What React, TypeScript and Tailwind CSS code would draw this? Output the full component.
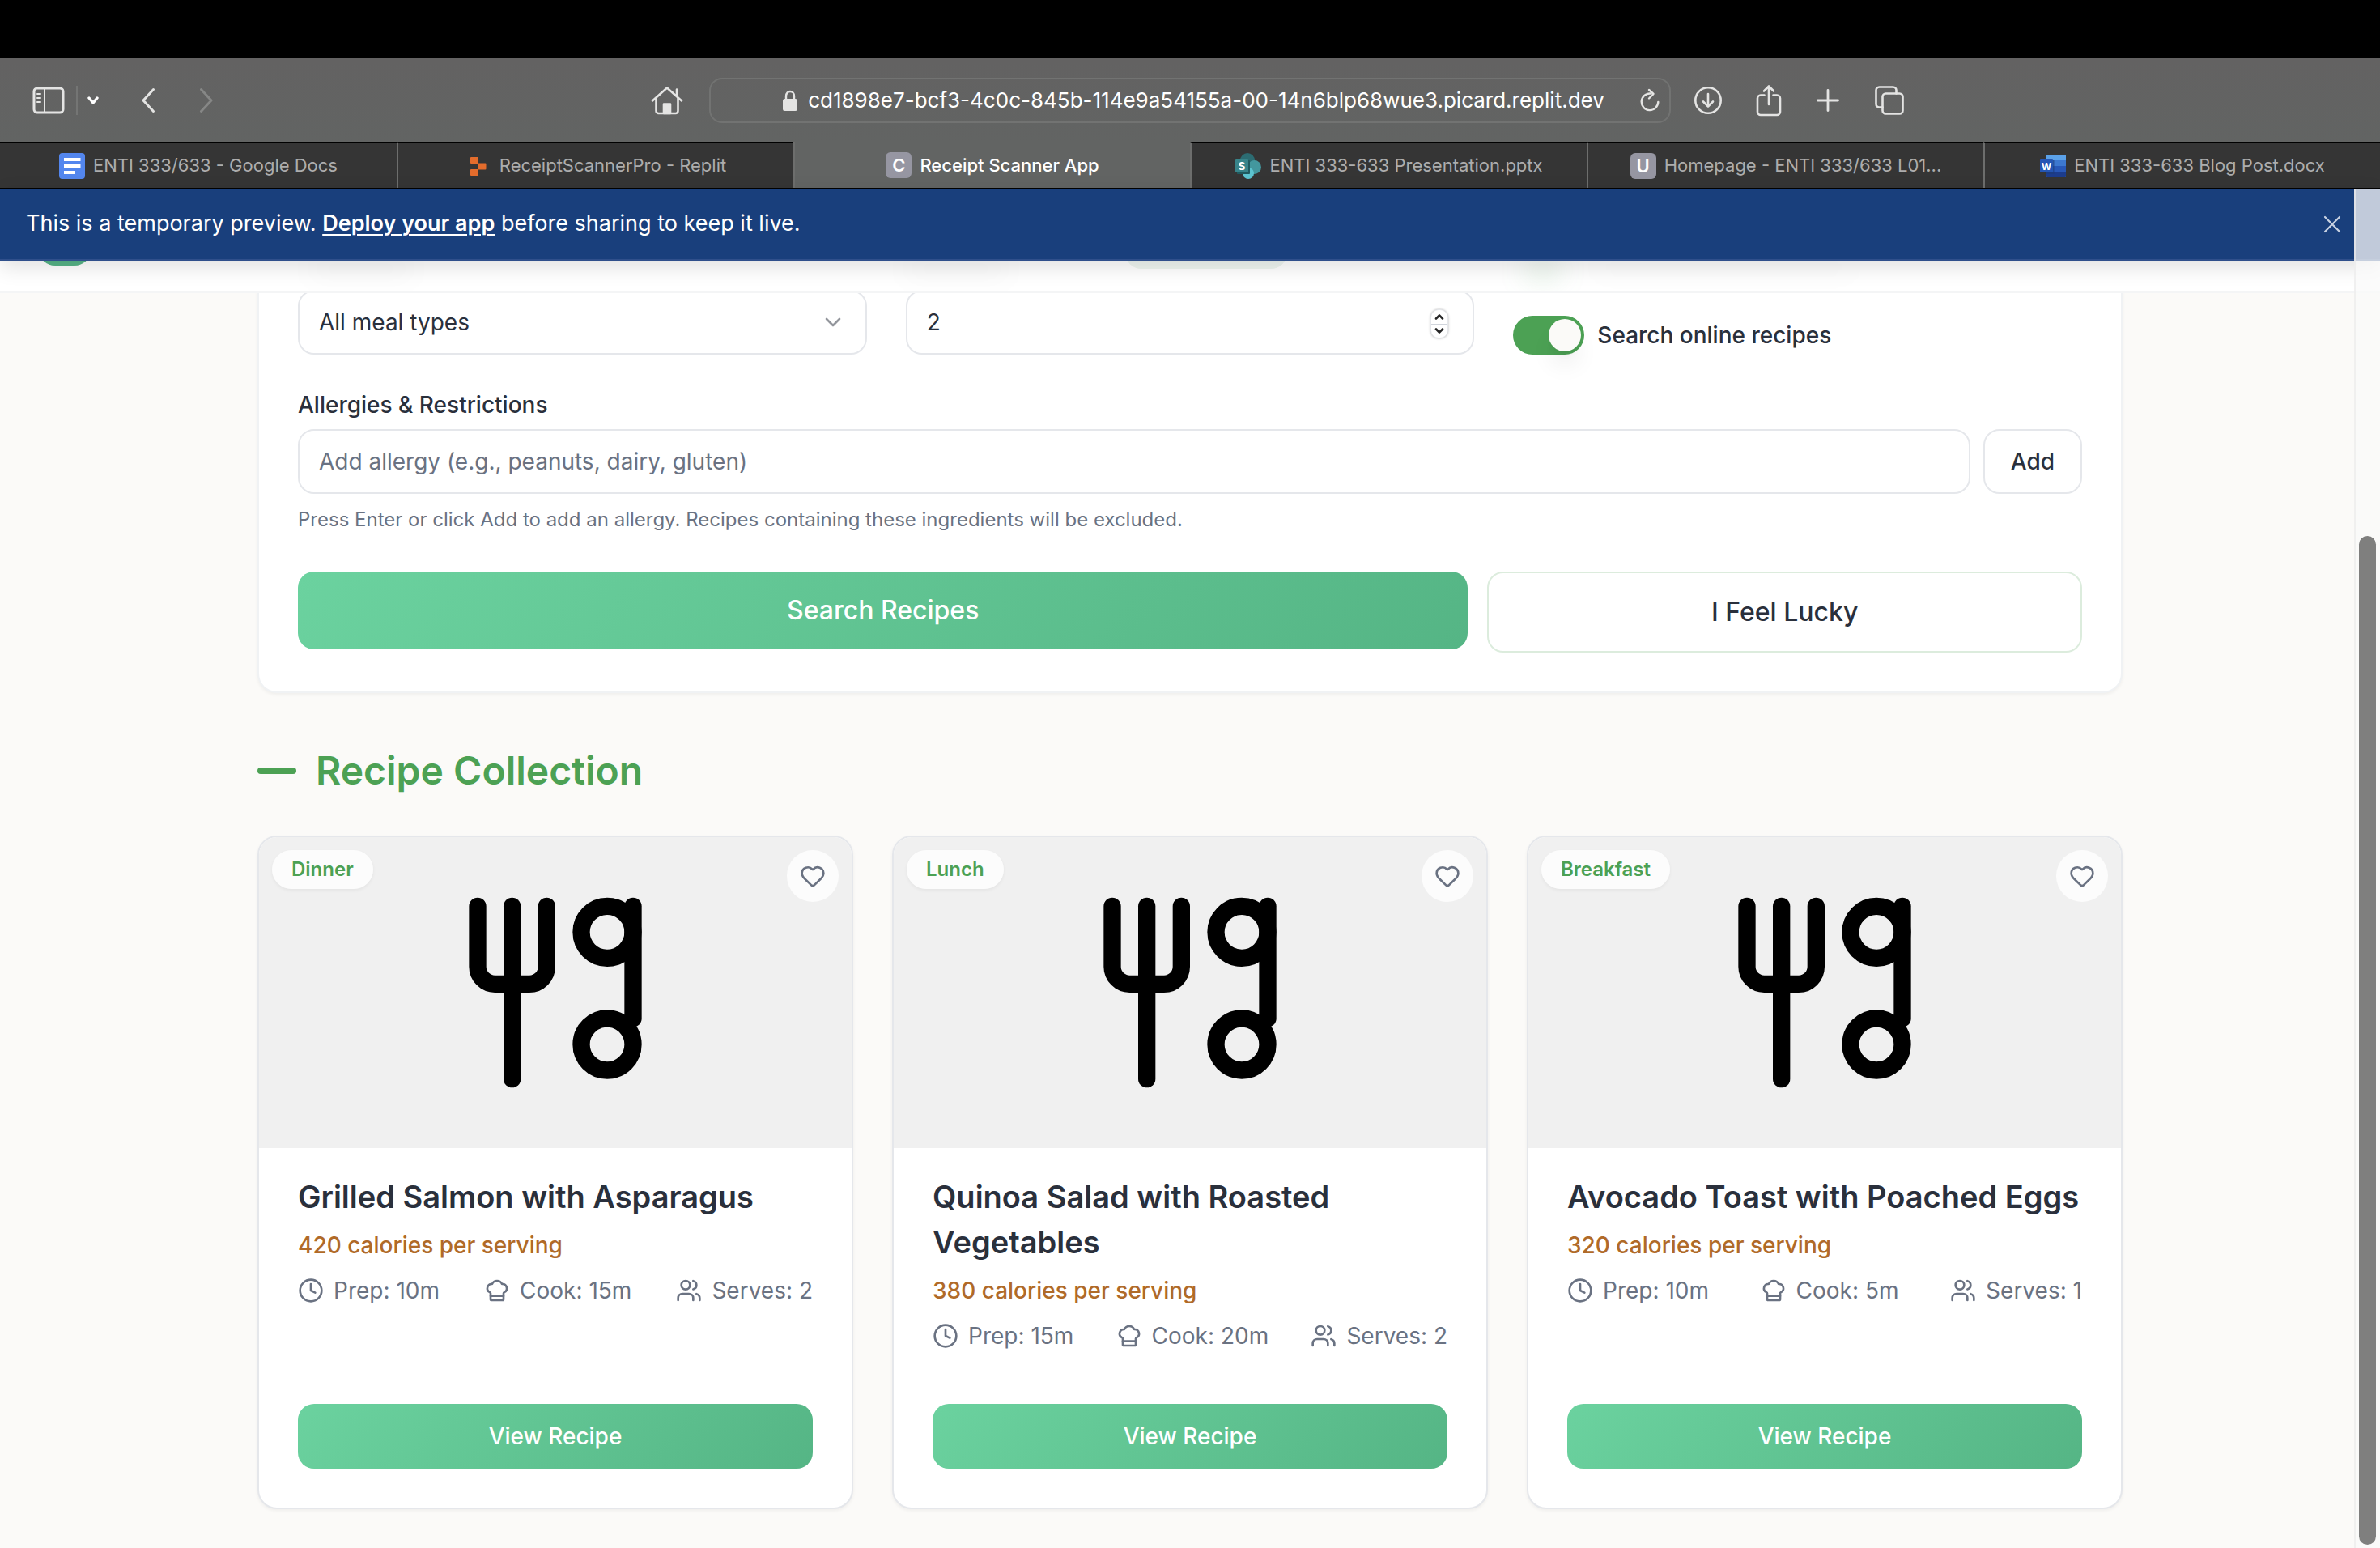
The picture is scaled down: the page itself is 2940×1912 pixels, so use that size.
import React from "react";
import { ChefHat, ChevronDown, Clock, Heart, Users } from "lucide-react";

/* ---------- Browser chrome ---------- */

function Stroke({ w, h, sw = 2.5, className = "", children }: { w: number; h: number; sw?: number; className?: string; children: React.ReactNode }) {
  return (
    <svg width={w} height={h} viewBox={`0 0 ${w} ${h}`} fill="none" stroke="currentColor" strokeWidth={sw} strokeLinecap="round" strokeLinejoin="round" className={className} aria-hidden="true">
      {children}
    </svg>
  );
}

function Toolbar() {
  return (
    <div className="grid h-[104px] grid-cols-[minmax(0,1fr)_minmax(0,1188px)_minmax(0,1fr)] items-center bg-linear-to-b from-[#636262] to-[#626463] text-[#e4e4e3]">
      <div className="flex items-center pr-8 pl-10">
        <button aria-label="Sidebar">
          <Stroke w={40} h={34} sw={3}>
            <rect x="2" y="2" width="36" height="30" rx="4" />
            <path d="M15 2v30" strokeWidth="2" />
            <path d="M6 9h4M6 14h4M6 19h4" strokeWidth="2" />
          </Stroke>
        </button>
        <span className="ml-3.5 h-9 w-0.5 bg-[#747574]" />
        <button aria-label="Tab groups" className="ml-3 text-white">
          <Stroke w={14} h={10} sw={3.4}>
            <path d="M2 2l5 6 5-6" />
          </Stroke>
        </button>
        <button aria-label="Back" className="ml-[52px]">
          <Stroke w={18} h={32} sw={3}>
            <path d="M15.500 2.500L3 16l12.500 13.500" />
          </Stroke>
        </button>
        <button aria-label="Forward" className="ml-[54px] text-[#868786]">
          <Stroke w={18} h={32} sw={3}>
            <path d="M2.500 2.500L15 16 2.500 29.500" />
          </Stroke>
        </button>
        <button aria-label="Home" className="ml-auto">
          <Stroke w={40} h={36} sw={2.6}>
            <path d="M2 18.500L20 2.500l18 16M32 12.500V4.500" />
            <path d="M6.500 15.500V31a3 3 0 0 0 3 3h21a3 3 0 0 0 3-3V15.500" />
            <path d="M16 34V22.500h8V34z" fill="currentColor" />
          </Stroke>
        </button>
      </div>
      <div className="flex h-14 items-center justify-center rounded-2xl border-2 border-[#727372] px-3">
        <div className="ml-8 flex min-w-0 flex-1 items-center justify-center gap-3">
          <svg width="20" height="26" viewBox="0 0 20 26" aria-hidden="true" className="shrink-0">
            <path d="M5 12V7.500a5 5.500 0 0 1 10 0V12" fill="none" stroke="currentColor" strokeWidth="2.400" />
            <rect x="1" y="11" width="18" height="15" rx="2.500" fill="currentColor" />
          </svg>
          <span className="truncate text-[26px] leading-8 text-white">cd1898e7-bcf3-4c0c-845b-114e9a54155a-00-14n6blp68wue3.picard.replit.dev</span>
        </div>
        <button aria-label="Reload">
          <Stroke w={24} h={30} sw={2.4}>
            <path d="M12.500 6.500A10.300 10.300 0 1 0 22.300 17" />
            <path d="M11 2l5.500 5L11 12.500" />
          </Stroke>
        </button>
      </div>
      <div className="flex items-center pl-7">
        <button aria-label="Downloads">
          <Stroke w={36} h={36} sw={2.6}>
            <circle cx="18" cy="18" r="15.700" />
            <path d="M18 10v15.500M12 19.500l6 6 6-6" />
          </Stroke>
        </button>
        <button aria-label="Share" className="ml-10">
          <Stroke w={34} h={40} sw={2.6}>
            <path d="M11.500 13.500H7a4 4 0 0 0-4 4V34a4 4 0 0 0 4 4h20a4 4 0 0 0 4-4V17.500a4 4 0 0 0-4-4h-4.500" />
            <path d="M17 25V3M11 8.500L17 2.500l6 6" />
          </Stroke>
        </button>
        <button aria-label="New tab" className="ml-[42px]">
          <Stroke w={28} h={28} sw={2.8}>
            <path d="M14 1.500v25M1.500 14h25" />
          </Stroke>
        </button>
        <button aria-label="Tab overview" className="ml-11">
          <Stroke w={36} h={36} sw={2.6}>
            <rect x="9.500" y="9.500" width="25" height="25" rx="4" />
            <path d="M9.500 26.500H5.500a4 4 0 0 1-4-4V5.500a4 4 0 0 1 4-4h17a4 4 0 0 1 4 4v4" />
          </Stroke>
        </button>
      </div>
    </div>
  );
}

function DocsIcon() {
  return (
    <svg width="32" height="32" viewBox="0 0 32 32" className="shrink-0" aria-hidden="true">
      <rect width="32" height="32" rx="4" fill="#5386ee" />
      <path d="M6 6h20.500v4H6zM6 14h20.500v4H6zM6 22h14v4H6z" fill="#fff" />
    </svg>
  );
}

function ReplitIcon() {
  return (
    <svg width="32" height="32" viewBox="0 0 32 32" className="shrink-0" fill="#e36c2c" aria-hidden="true">
      <rect x="6" y="5" width="10" height="8" rx="1" />
      <rect x="15.500" y="12.500" width="10" height="8" rx="1" />
      <rect x="6" y="20" width="10" height="8" rx="1" />
    </svg>
  );
}

function SharePointIcon() {
  return (
    <svg width="32" height="32" viewBox="0 0 32 32" className="shrink-0" aria-hidden="true">
      <circle cx="15" cy="9" r="9" fill="#2c6c72" />
      <circle cx="23.500" cy="17.500" r="8.500" fill="#43979e" />
      <circle cx="16" cy="25" r="7" fill="#5cc4d0" />
      <rect x="2" y="9" width="16" height="17" rx="1" fill="#1f5a5f" />
      <rect x="0" y="8" width="16" height="16" rx="1" fill="#38848a" />
      <text x="8" y="21" textAnchor="middle" fontSize="13" fontWeight="700" fill="#fff" fontFamily="Inter, sans-serif">S</text>
    </svg>
  );
}

function WordIcon() {
  return (
    <svg width="32" height="32" viewBox="0 0 32 32" className="shrink-0" aria-hidden="true">
      <rect x="8" y="2" width="24" height="28" rx="1" fill="#3d78cf" />
      <path d="M8 9V3a1 1 0 0 1 1-1h22a1 1 0 0 1 1 1v6z" fill="#5ba1e8" />
      <path d="M8 16h24v7H8z" fill="#2858b8" />
      <path d="M8 23h24v6a1 1 0 0 1-1 1H9a1 1 0 0 1-1-1z" fill="#1c3c8c" />
      <rect x="8" y="9" width="9.500" height="17" fill="#1c3a78" opacity="0.600" />
      <rect x="0" y="8" width="16" height="16" rx="1" fill="#2456b4" />
      <text x="8" y="20.500" textAnchor="middle" fontSize="12" fontWeight="700" fill="#fff" fontFamily="Inter, sans-serif">W</text>
    </svg>
  );
}

function LetterIcon({ letter }: { letter: string }) {
  return (
    <span className="flex size-8 shrink-0 items-center justify-center rounded-md bg-[#9696a2] text-[22px] leading-none font-semibold text-white">{letter}</span>
  );
}

const TABS = [
  { title: "ENTI 333/633 - Google Docs", icon: <DocsIcon /> },
  { title: "ReceiptScannerPro - Replit", icon: <ReplitIcon /> },
  { title: "Receipt Scanner App", icon: <LetterIcon letter="C" />, active: true },
  { title: "ENTI 333-633 Presentation.pptx", icon: <SharePointIcon /> },
  { title: "Homepage - ENTI 333/633 L01...", icon: <LetterIcon letter="U" /> },
  { title: "ENTI 333-633 Blog Post.docx", icon: <WordIcon /> },
];

function TabStrip() {
  return (
    <nav className="grid h-[57px] grid-cols-6 border-b border-black" aria-label="Tabs">
      {TABS.map((t) => (
        <button
          key={t.title}
          className={
            t.active
              ? "flex items-center justify-center gap-2.5 border-l-2 border-[#6d6e6d] bg-[#626463] text-[22px] font-medium text-white"
              : "flex items-center justify-center gap-2.5 border-t border-l-2 border-t-black border-l-[#6d6e6d] bg-[#353535] text-[22px] text-[#adadad] first:border-l-0"
          }
        >
          {t.icon}
          <span className="truncate">{t.title}</span>
        </button>
      ))}
    </nav>
  );
}

/* ---------- Page ---------- */

function PreviewBanner() {
  return (
    <div className="relative z-20 flex h-[89px] items-center justify-between border-b-2 border-[#2f4f8b] bg-[#193f7c] pr-12 pl-8 text-[27px] text-white shadow-[0_8px_24px_rgba(0,0,0,0.12)]">
      <p>
        This is a temporary preview.{" "}
        <a href="#deploy" className="font-semibold underline decoration-2 underline-offset-4">Deploy your app</a> before sharing to keep it live.
      </p>
      <button aria-label="Dismiss" className="text-[#c9d2e2]">
        <Stroke w={22} h={22} sw={2.2}>
          <path d="M2 2l18 18M20 2L2 20" />
        </Stroke>
      </button>
    </div>
  );
}

function SiteHeader() {
  return (
    <header className="relative z-10 flex h-10 items-start overflow-hidden border-b-2 border-[#f4f5f6] bg-white pl-12">
      <span className="-mt-[58px] size-16 shrink-0 rounded-[20px] bg-[#56b487]" />
      <span className="-mt-[54px] ml-[44.2%] h-16 w-[200px] shrink-0 rounded-[20px] bg-[#eff6f1]" />
      <span className="absolute top-0 left-[13%] h-5 w-32 rounded-full bg-black/3 blur-lg" />
      <span className="absolute top-0 left-[38%] h-5 w-32 rounded-full bg-black/3 blur-lg" />
      <span className="absolute top-0 left-[64%] h-6 w-12 rounded-full bg-[#4ca154]/15 blur-lg" />
      <span className="absolute top-0 left-[67%] h-4 w-80 rounded-full bg-black/2 blur-lg" />
    </header>
  );
}

function SearchCard() {
  return (
    <section className="-mt-1 rounded-b-3xl border-2 border-t-0 border-[#f0f2f4] bg-white px-12 pb-12 text-[28px] shadow-[0_2px_4px_rgba(0,0,0,0.05)]">
      <div className="grid grid-cols-3 gap-12">
        <div className="relative">
          <select aria-label="Meal type" className="h-20 w-full appearance-none rounded-[20px] border-2 border-gray-200 bg-white pr-16 pl-6">
            <option>All meal types</option>
          </select>
          <ChevronDown className="pointer-events-none absolute top-6 right-[26px] size-8 opacity-50" />
        </div>
        <div className="relative">
          <input
            type="number"
            aria-label="Servings"
            defaultValue={2}
            className="h-20 w-full [appearance:textfield] rounded-[20px] border-2 border-gray-200 bg-white px-6 [&::-webkit-inner-spin-button]:appearance-none"
          />
          <div className="absolute top-6 right-8 flex h-9 w-[22px] flex-col items-center justify-evenly rounded-[10px] border border-gray-200 bg-white text-[#262626] shadow-[0_0_3px_rgba(0,0,0,0.3)]">
            <button aria-label="Increase" className="flex w-full flex-1 items-center justify-center border-b border-gray-300">
              <Stroke w={12} h={8} sw={2.6}>
                <path d="M2 6.500l4-4 4 4" />
              </Stroke>
            </button>
            <button aria-label="Decrease" className="flex w-full flex-1 items-center justify-center">
              <Stroke w={12} h={8} sw={2.6}>
                <path d="M2 1.500l4 4 4-4" />
              </Stroke>
            </button>
          </div>
        </div>
        <label className="flex h-12 items-center gap-4 self-end font-medium">
          <input
            type="checkbox"
            role="switch"
            defaultChecked
            className="flex h-12 w-[88px] appearance-none items-center rounded-full bg-[#4ca154] px-1 before:size-10 before:rounded-full before:bg-[#fbfaf8] before:shadow-[0_20px_30px_-6px_rgba(0,0,0,0.1),0_8px_12px_-8px_rgba(0,0,0,0.1)] checked:before:ml-auto"
          />
          Search online recipes
        </label>
      </div>

      <label htmlFor="allergy" className="mt-12 block leading-none font-medium">
        Allergies &amp; Restrictions
      </label>
      <div className="mt-4 flex gap-4">
        <input
          id="allergy"
          placeholder="Add allergy (e.g., peanuts, dairy, gluten)"
          className="h-20 min-w-0 flex-1 rounded-[20px] border-2 border-gray-200 bg-white px-6 placeholder:text-gray-500"
        />
        <button className="h-20 rounded-[20px] border-2 border-gray-200 bg-white px-8 font-medium">Add</button>
      </div>
      <p className="mt-4 text-2xl text-gray-500">Press Enter or click Add to add an allergy. Recipes containing these ingredients will be excluded.</p>

      <div className="mt-12 flex items-start gap-6 text-[32px] font-medium">
        <button className="h-24 flex-2 rounded-[20px] bg-linear-135 from-[#6bd29f] to-[#55b585] text-white">Search Recipes</button>
        <button className="h-[100px] flex-1 rounded-[20px] border-2 border-[#dcecdd] bg-white px-1">I Feel Lucky</button>
      </div>
    </section>
  );
}

function PlaceholderDish() {
  return (
    <svg viewBox="0 0 24 24" fill="none" stroke="#000" strokeWidth="2" strokeLinecap="round" strokeLinejoin="round" className="size-64" role="img" aria-label="Recipe placeholder">
      <path d="M3 2v7c0 1.100.9 2 2 2h4a2 2 0 0 0 2-2V2" />
      <path d="M7 2v20" />
      <path d="M21 2v13" />
      <circle cx="18" cy="5" r="3" />
      <circle cx="18" cy="18" r="3" />
    </svg>
  );
}

const RECIPES = [
  { meal: "Dinner", title: "Grilled Salmon with Asparagus", calories: 420, prep: 10, cook: 15, serves: 2 },
  { meal: "Lunch", title: "Quinoa Salad with Roasted Vegetables", calories: 380, prep: 15, cook: 20, serves: 2 },
  { meal: "Breakfast", title: "Avocado Toast with Poached Eggs", calories: 320, prep: 10, cook: 5, serves: 1 },
];

function RecipeCard({ r }: { r: (typeof RECIPES)[number] }) {
  return (
    <article className="flex flex-col overflow-hidden rounded-3xl border-2 border-gray-200 bg-white shadow-[0_2px_4px_rgba(0,0,0,0.05)]">
      <div className="relative flex h-96 items-center justify-center bg-[#f0f0f0]">
        <PlaceholderDish />
        <span className="absolute top-4 left-4 flex h-12 items-center rounded-full bg-white/80 px-6 text-2xl font-semibold text-[#4ca154] shadow-[0_2px_4px_rgba(0,0,0,0.05)]">{r.meal}</span>
        <button aria-label={`Save ${r.title}`} className="absolute top-4 right-4 flex size-16 items-center justify-center rounded-full bg-white/80 text-gray-500">
          <Heart className="size-8" />
        </button>
      </div>
      <div className="flex flex-1 flex-col px-12 pt-8 pb-12">
        <h3 className="text-[38px] leading-14 font-semibold">{r.title}</h3>
        <p className="mt-3 text-[28px] leading-10 font-medium text-[#b06a28]">{r.calories} calories per serving</p>
        <ul className="mt-4 flex justify-between text-[28px] leading-10 text-gray-500">
          <li className="flex items-center gap-3">
            <Clock className="size-8" />
            Prep: {r.prep}m
          </li>
          <li className="flex items-center gap-3">
            <ChefHat className="size-8" />
            Cook: {r.cook}m
          </li>
          <li className="flex items-center gap-3">
            <Users className="size-8" />
            Serves: {r.serves}
          </li>
        </ul>
        <div className="mt-auto pt-16">
          <button className="h-20 w-full rounded-[20px] bg-linear-135 from-[#6bd29f] to-[#55b585] text-[28px] font-medium text-white">View Recipe</button>
        </div>
      </div>
    </article>
  );
}

export default function App() {
  return (
    <div className="flex min-h-screen flex-col bg-[#fbfaf8] font-['Inter',sans-serif] text-[#2a303c]">
      <div className="h-[72px] bg-black" />
      <Toolbar />
      <TabStrip />
      <div className="relative flex-1">
        <PreviewBanner />
        <SiteHeader />
        <main className="mx-auto max-w-[2304px] pb-12">
          <SearchCard />
          <h2 className="mt-16 flex h-16 items-center gap-6 text-[48px] font-semibold text-[#4ca154]">
            <span className="h-2 w-12 rounded-full bg-[#4ca154]" />
            Recipe Collection
          </h2>
          <div className="mt-12 grid grid-cols-3 gap-12">
            {RECIPES.map((r) => (
              <RecipeCard key={r.title} r={r} />
            ))}
          </div>
        </main>
        <div className="absolute inset-y-0 right-0 z-30 w-8 border-l-2 border-[#ebebeb]/70 bg-[#fafafa]/75">
          <div className="absolute top-[429px] right-[5px] bottom-1 left-1 rounded-full bg-[#7f7f7e]" />
        </div>
      </div>
    </div>
  );
}
